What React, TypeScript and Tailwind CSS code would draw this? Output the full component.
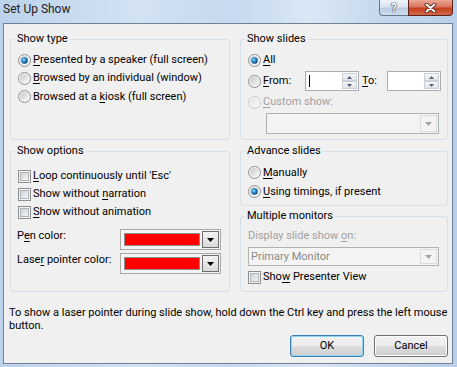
import React from "react";

function U({ c }: { c: string }) {
  return <span className="underline decoration-1 underline-offset-2">{c}</span>;
}

function Radio({ checked = false, disabled = false }: { checked?: boolean; disabled?: boolean }) {
  return (
    <svg width="13" height="13" viewBox="0 0 13 13" className="shrink-0">
      <defs>
        <linearGradient id="rgN" x1="0" y1="0" x2="1" y2="1">
          <stop offset="0" stopColor="#c6c6c6" />
          <stop offset="1" stopColor="#fafafa" />
        </linearGradient>
        <linearGradient id="rgD" x1="0" y1="0" x2="1" y2="1">
          <stop offset="0" stopColor="#e6e6e6" />
          <stop offset="1" stopColor="#f8f8f8" />
        </linearGradient>
        <radialGradient id="rdot" cx="0.4" cy="0.4" r="0.65">
          <stop offset="0" stopColor="#8fe3ff" />
          <stop offset="0.45" stopColor="#2a8fd3" />
          <stop offset="1" stopColor="#0b3b63" />
        </radialGradient>
      </defs>
      <circle cx="6.5" cy="6.5" r="6" fill="#f6f6f6" stroke={disabled ? "#c9c9c9" : "#8b8e91"} />
      <circle cx="6.5" cy="6.5" r="4.6" fill={disabled ? "url(#rgD)" : "url(#rgN)"} />
      {checked && <circle cx="6.5" cy="6.5" r="3.2" fill="url(#rdot)" />}
    </svg>
  );
}

function Check() {
  return (
    <svg width="13" height="13" viewBox="0 0 13 13" className="shrink-0">
      <defs>
        <linearGradient id="cgN" x1="0" y1="0" x2="1" y2="1">
          <stop offset="0" stopColor="#cbcfd5" />
          <stop offset="1" stopColor="#f7f7f7" />
        </linearGradient>
      </defs>
      <rect x="0.5" y="0.5" width="12" height="12" fill="#f4f4f4" stroke="#8e8f8f" />
      <rect x="2.5" y="2.5" width="8" height="8" fill="url(#cgN)" stroke="#aeb3b9" />
    </svg>
  );
}

function Group({
  title,
  className,
  children,
}: {
  title: string;
  className: string;
  children: React.ReactNode;
}) {
  return (
    <fieldset className={`rounded-[3px] border border-[#d5dfe5] ${className}`}>
      <legend className="ml-[4px] px-[2px] leading-[14px]">{title}</legend>
      {children}
    </fieldset>
  );
}

function SpinBtn({ up }: { up?: boolean }) {
  return (
    <div className="flex flex-1 items-center justify-center border border-[#c9d1da] bg-[linear-gradient(180deg,#f7f7f7,#e2e2e2)]">
      <svg width="5" height="3" viewBox="0 0 5 3">
        <path d={up ? "M0 3H5L2.5 0Z" : "M0 0H5L2.5 3Z"} fill="#4d6185" />
      </svg>
    </div>
  );
}

function Spin({ caret }: { caret?: boolean }) {
  return (
    <div className="flex h-[20px] w-[54px] border border-[#abadb3] bg-white">
      <div className="flex flex-1 items-center pl-[3px]">
        {caret && <div className="h-[12px] w-px bg-black" />}
      </div>
      <div className="flex w-[16px] flex-col py-[1px] pr-[1px]">
        <SpinBtn up />
        <SpinBtn />
      </div>
    </div>
  );
}

function ColorCombo() {
  return (
    <div className="flex h-[21px] w-[101px] items-center border border-[#a9a9a9] bg-[#f4f4f4] pl-[3px] pr-[1px]">
      <div className="h-[13px] w-[76px] border border-[#8f8f8f] bg-[#ff0000]" />
      <div className="ml-auto flex h-[17px] w-[17px] items-center justify-center border border-[#6f6f6f] bg-[linear-gradient(180deg,#f3f3f3,#dadada)]">
        <svg width="7" height="4" viewBox="0 0 7 4">
          <path d="M0 0H7L3.5 4Z" fill="#000" />
        </svg>
      </div>
    </div>
  );
}

function DisabledCombo({ text, className }: { text?: string; className: string }) {
  return (
    <div className={`flex items-center border border-[#adb2b5] bg-[#f4f4f4] ${className}`}>
      <span className="flex-1 pl-[2px] text-[#8a8a8a]">{text}</span>
      <div className="mr-[1px] flex h-[calc(100%-2px)] w-[17px] items-center justify-center border border-[#d9dcde] bg-[#f4f4f4]">
        <svg width="7" height="4" viewBox="0 0 7 4">
          <path d="M0 0H7L3.5 4Z" fill="#a3a3a3" />
        </svg>
      </div>
    </div>
  );
}

function RadioRow({
  checked,
  disabled,
  className,
  children,
}: {
  checked?: boolean;
  disabled?: boolean;
  className: string;
  children: React.ReactNode;
}) {
  return (
    <div className={`flex items-center gap-[2px] ${className}`}>
      <Radio checked={checked} disabled={disabled} />
      <span className={disabled ? "text-[#a0a0a0]" : ""}>{children}</span>
    </div>
  );
}

function CheckRow({ className, children }: { className: string; children: React.ReactNode }) {
  return (
    <div className={`flex items-center gap-[2px] ${className}`}>
      <Check />
      <span>{children}</span>
    </div>
  );
}

export default function App() {
  return (
    <div className="flex h-[367px] w-[457px] flex-col bg-[linear-gradient(90deg,#bcd3eb_0%,#d3e2f3_30%,#c6d9ee_50%,#dae7f5_68%,#c3d7ec_85%,#b9d0e8_100%)] font-['Roboto',sans-serif] text-[11px] leading-[14px] text-black">
      {/* title bar */}
      <div className="flex h-[23px] shrink-0 items-start">
        <div className="pl-[3px] pt-[2px] text-[12px] leading-[15px] text-[#1e1e1e]">Set Up Show</div>
        <div className="ml-auto mr-[4px] flex h-[16px]">
          <div className="flex w-[29px] items-center justify-center rounded-bl-[4px] border border-t-0 border-r-0 border-[#64778c] bg-[linear-gradient(180deg,#eef3f9_0%,#dbe5f0_45%,#bccde0_55%,#cddcec_100%)] text-[12px] font-bold leading-[12px] text-white [text-shadow:0_0_1px_#2d3e50,0_0_1px_#2d3e50,0_0_1px_#2d3e50]">
            ?
          </div>
          <div className="flex w-[45px] items-center justify-center rounded-br-[4px] border border-t-0 border-[#5a2218] bg-[linear-gradient(180deg,#eba795_0%,#d8765e_45%,#c4401f_55%,#d3684a_100%)]">
            <svg width="13" height="10" viewBox="0 0 13 10">
              <path d="M2.5 1.5L10.5 8.5M10.5 1.5L2.5 8.5" stroke="#3d1409" strokeWidth="3.6" strokeLinecap="round" />
              <path d="M2.5 1.5L10.5 8.5M10.5 1.5L2.5 8.5" stroke="#ffffff" strokeWidth="2" strokeLinecap="round" />
            </svg>
          </div>
        </div>
      </div>

      {/* client area */}
      <div className="ml-[3px] mr-[4px] h-[341px] shrink-0 border border-[#6f8295] bg-[#f0f0f0]">
        <div className="flex gap-[10px] pl-[6px] pt-[8px]">
          {/* left column */}
          <div className="flex w-[220px] flex-col">
            <Group title="Show type" className="h-[108px]">
              <div className="flex flex-col pl-[7px] pt-[5px]">
                <RadioRow checked className="h-[18px]">
                  <U c="P" />resented by a speaker (full screen)
                </RadioRow>
                <RadioRow className="h-[18px]">
                  <U c="B" />rowsed by an individual (window)
                </RadioRow>
                <RadioRow className="h-[19px]">
                  Browsed at a <U c="k" />iosk (full screen)
                </RadioRow>
              </div>
            </Group>
            <Group title="Show options" className="mt-[4px] h-[148px]">
              <div className="flex flex-col pl-[6px] pt-[9px]">
                <CheckRow className="h-[18px] pl-[1px]">
                  <U c="L" />oop continuously until 'Esc'
                </CheckRow>
                <CheckRow className="h-[18px] pl-[1px]">
                  Show without <U c="n" />arration
                </CheckRow>
                <CheckRow className="h-[18px] pl-[1px]">
                  <U c="S" />how without animation
                </CheckRow>
                <div className="mt-[8px] flex items-start">
                  <span className="w-[103px]">
                    P<U c="e" />n color:
                  </span>
                  <ColorCombo />
                </div>
                <div className="mt-[3px] flex items-start">
                  <span className="w-[103px]">
                    Lase<U c="r" /> pointer color:
                  </span>
                  <ColorCombo />
                </div>
              </div>
            </Group>
          </div>

          {/* right column */}
          <div className="flex w-[208px] flex-col">
            <Group title="Show slides" className="h-[108px]">
              <div className="flex flex-col pl-[7px] pt-[5px]">
                <RadioRow checked className="h-[18px]">
                  <U c="A" />ll
                </RadioRow>
                <div className="mt-[2px] flex h-[20px] items-center">
                  <RadioRow className="h-[20px] w-[57px]">
                    <U c="F" />rom:
                  </RadioRow>
                  <Spin caret />
                  <span className="ml-[3px] w-[25px]">
                    <U c="T" />o:
                  </span>
                  <Spin />
                </div>
                <RadioRow disabled className="mt-[2px] h-[18px]">
                  <U c="C" />ustom show:
                </RadioRow>
                <DisabledCombo className="ml-[18px] mt-[2px] h-[21px] w-[173px]" />
              </div>
            </Group>
            <Group title="Advance slides" className="mt-[4px] h-[62px]">
              <div className="flex flex-col pl-[7px] pt-[5px]">
                <RadioRow className="h-[19px]">
                  <U c="M" />anually
                </RadioRow>
                <RadioRow checked className="h-[19px]">
                  <U c="U" />sing timings, if present
                </RadioRow>
              </div>
            </Group>
            <Group title="Multiple monitors" className="mt-[3px] h-[83px]">
              <div className="flex flex-col pl-[7px] pt-[6px]">
                <span className="text-[#a0a0a0]">
                  Display slide show <U c="o" />n:
                </span>
                <DisabledCombo text="Primary Monitor" className="mt-[4px] h-[19px] w-[191px]" />
                <CheckRow className="mt-[2px] h-[18px]">
                  Sho<U c="w" /> Presenter View
                </CheckRow>
              </div>
            </Group>
          </div>
        </div>

        <p className="ml-[5px] mt-[14px] leading-[13px]">
          To show a laser pointer during slide show, hold down the Ctrl key and press the left mouse button.
        </p>

        <div className="mt-[3px] flex justify-end gap-[10px] pr-[4px]">
          <button className="h-[22px] w-[74px] rounded-[3px] border border-[#3c7fb1] bg-[linear-gradient(180deg,#f2f2f2_0%,#ebebeb_50%,#dddddd_50%,#cfcfcf_100%)] shadow-[inset_0_0_0_1px_#8fd6f6] text-[11px] leading-[14px]">
            OK
          </button>
          <button className="h-[22px] w-[74px] rounded-[3px] border border-[#707070] bg-[linear-gradient(180deg,#f2f2f2_0%,#ebebeb_50%,#dddddd_50%,#cfcfcf_100%)] shadow-[inset_0_0_0_1px_#fcfcfc] text-[11px] leading-[14px]">
            Cancel
          </button>
        </div>
      </div>
    </div>
  );
}
